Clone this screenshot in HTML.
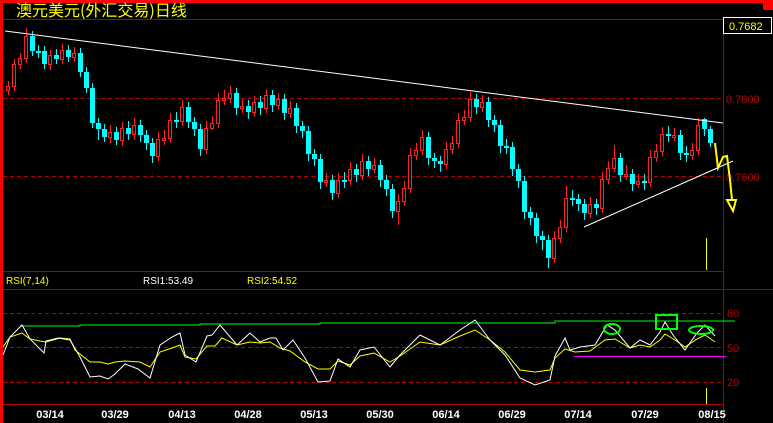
<!DOCTYPE html>
<html><head><meta charset="utf-8"><style>
html,body{margin:0;padding:0;background:#000;overflow:hidden}
svg{display:block}
text{font-family:"Liberation Sans","Noto Sans CJK SC",sans-serif}
</style></head><body>
<svg width="773" height="423" xmlns="http://www.w3.org/2000/svg" shape-rendering="crispEdges">
<rect width="773" height="423" fill="#000"/>
<rect x="0" y="0" width="773" height="3" fill="#f00"/>
<rect x="0" y="0" width="3" height="423" fill="#f00"/>
<rect x="763" y="0" width="10" height="10" fill="#f00"/>
<text x="16" y="16" font-size="16" fill="#ff0" style="font-family:'Noto Sans CJK SC',sans-serif">澳元美元(外汇交易)日线</text>
<line x1="3" y1="19.5" x2="773" y2="19.5" stroke="#a00"/>
<line x1="723.5" y1="19" x2="723.5" y2="423" stroke="#a00"/>
<rect x="723.5" y="17.5" width="48" height="16" fill="#000" stroke="#fff"/>
<text x="729" y="30" font-size="11" fill="#ff0">0.7682</text>
<line x1="3" y1="98.5" x2="723" y2="98.5" stroke="#b00" stroke-dasharray="4,3"/>
<line x1="3" y1="176.5" x2="723" y2="176.5" stroke="#b00" stroke-dasharray="4,3"/>
<text x="726" y="103" font-size="11" fill="#b00">0.7800</text>
<text x="726" y="181" font-size="11" fill="#b00">0.7600</text>

<!-- candles: cyan -->
<path fill="none" stroke="#0ff" d="M32.5 31V56M38.5 45V58M44.5 46V69M56.5 49V64M68.5 45V62M80.5 48V77M86.5 67V93M92.5 83V128M98.5 118V140M104.5 124V142M116.5 127V145M128.5 121V140M140.5 120V142M146.5 130V150M152.5 138V163M176.5 112V128M188.5 102V128M194.5 117V136M200.5 124V156M236.5 88V115M248.5 100V119M260.5 96V115M272.5 90V112M284.5 94V120M296.5 103V133M302.5 121V138M308.5 126V161M314.5 149V166M320.5 154V189M332.5 175V200M344.5 172V188M356.5 164V182M368.5 156V176M380.5 160V187M386.5 175V196M392.5 184V218M428.5 132V165M434.5 153V168M440.5 156V172M476.5 94V114M488.5 97V127M494.5 115V132M500.5 120V153M506.5 139V154M512.5 142V176M518.5 164V188M524.5 176V219M530.5 207V225M536.5 213V243M542.5 231V250M548.5 235V268M572.5 190V206M578.5 194V211M584.5 199V220M596.5 199V215M620.5 153V182M632.5 169V191M644.5 174V190M668.5 126V142M680.5 130V160M686.5 146V162M704.5 118V136M710.5 126V147"/>
<g fill="#0ff">
<rect x="30" y="36" width="5" height="15"/><rect x="36" y="51" width="5" height="2"/><rect x="42" y="51" width="5" height="13"/><rect x="54" y="55" width="5" height="4"/><rect x="66" y="50" width="5" height="7"/><rect x="78" y="53" width="5" height="19"/><rect x="84" y="72" width="5" height="16"/><rect x="90" y="88" width="5" height="35"/><rect x="96" y="123" width="5" height="6"/><rect x="102" y="129" width="5" height="8"/><rect x="114" y="132" width="5" height="8"/><rect x="126" y="128" width="5" height="6"/><rect x="138" y="125" width="5" height="10"/><rect x="144" y="135" width="5" height="8"/><rect x="150" y="143" width="5" height="13"/><rect x="174" y="120" width="5" height="2"/><rect x="186" y="107" width="5" height="15"/><rect x="192" y="122" width="5" height="7"/><rect x="198" y="129" width="5" height="20"/><rect x="234" y="93" width="5" height="15"/><rect x="246" y="106" width="5" height="6"/><rect x="258" y="102" width="5" height="6"/><rect x="270" y="95" width="5" height="10"/><rect x="282" y="99" width="5" height="14"/><rect x="294" y="108" width="5" height="18"/><rect x="300" y="126" width="5" height="5"/><rect x="306" y="131" width="5" height="23"/><rect x="312" y="154" width="5" height="5"/><rect x="318" y="159" width="5" height="23"/><rect x="330" y="180" width="5" height="13"/><rect x="342" y="180" width="5" height="2"/><rect x="354" y="169" width="5" height="6"/><rect x="366" y="161" width="5" height="8"/><rect x="378" y="165" width="5" height="15"/><rect x="384" y="180" width="5" height="9"/><rect x="390" y="189" width="5" height="22"/><rect x="426" y="137" width="5" height="21"/><rect x="432" y="158" width="5" height="3"/><rect x="438" y="161" width="5" height="3"/><rect x="474" y="99" width="5" height="8"/><rect x="486" y="102" width="5" height="18"/><rect x="492" y="120" width="5" height="5"/><rect x="498" y="125" width="5" height="21"/><rect x="504" y="146" width="5" height="2"/><rect x="510" y="147" width="5" height="22"/><rect x="516" y="169" width="5" height="12"/><rect x="522" y="181" width="5" height="31"/><rect x="528" y="212" width="5" height="6"/><rect x="534" y="218" width="5" height="18"/><rect x="540" y="236" width="5" height="4"/><rect x="546" y="240" width="5" height="18"/><rect x="570" y="198" width="5" height="2"/><rect x="576" y="199" width="5" height="5"/><rect x="582" y="204" width="5" height="9"/><rect x="594" y="204" width="5" height="4"/><rect x="618" y="158" width="5" height="17"/><rect x="630" y="174" width="5" height="10"/><rect x="642" y="181" width="5" height="2"/><rect x="666" y="134" width="5" height="2"/><rect x="678" y="135" width="5" height="18"/><rect x="684" y="153" width="5" height="2"/><rect x="702" y="119" width="5" height="10"/><rect x="708" y="129" width="5" height="14"/>
</g>
<!-- candles: red -->
<path fill="none" stroke="#f22" d="M8.5 81V95M14.5 59V91M20.5 53V69M26.5 28V63M50.5 50V70M62.5 44V64M74.5 47V62M110.5 125V143M122.5 122V146M134.5 118V140M158.5 132V161M164.5 130V145M170.5 113V143M182.5 100V126M206.5 121V154M212.5 116V130M218.5 93V128M224.5 90V105M230.5 86V103M242.5 99V113M254.5 96V117M266.5 89V113M278.5 93V110M290.5 101V118M326.5 173V187M338.5 173V198M350.5 162V185M362.5 154V180M374.5 158V174M398.5 194V225M404.5 181V206M410.5 148V193M416.5 143V160M422.5 130V155M446.5 142V169M452.5 136V154M458.5 113V148M464.5 110V125M470.5 92V122M482.5 95V112M554.5 231V263M560.5 220V243M566.5 186V232M590.5 197V218M602.5 172V213M608.5 161V184M614.5 145V172M626.5 165V180M638.5 174V188M650.5 150V187M656.5 144V162M662.5 127V156M674.5 128V141M692.5 143V160M698.5 118V155"/>
<g fill="#000" stroke="#f22">
<rect x="6.5" y="86.5" width="3" height="4"/><rect x="12.5" y="64.5" width="3" height="22"/><rect x="18.5" y="58.5" width="3" height="6"/><rect x="24.5" y="36.5" width="3" height="22"/><rect x="48.5" y="55.5" width="3" height="9"/><rect x="60.5" y="50.5" width="3" height="9"/><rect x="72.5" y="53.5" width="3" height="4"/><rect x="108.5" y="132.5" width="3" height="5"/><rect x="120.5" y="128.5" width="3" height="12"/><rect x="132.5" y="125.5" width="3" height="9"/><rect x="156.5" y="139.5" width="3" height="17"/><rect x="162.5" y="138.5" width="3" height="2"/><rect x="168.5" y="120.5" width="3" height="18"/><rect x="180.5" y="107.5" width="3" height="14"/><rect x="204.5" y="128.5" width="3" height="21"/><rect x="210.5" y="123.5" width="3" height="5"/><rect x="216.5" y="100.5" width="3" height="23"/><rect x="222.5" y="98.5" width="3" height="2"/><rect x="228.5" y="93.5" width="3" height="5"/><rect x="240.5" y="106.5" width="3" height="2"/><rect x="252.5" y="102.5" width="3" height="10"/><rect x="264.5" y="95.5" width="3" height="13"/><rect x="276.5" y="99.5" width="3" height="6"/><rect x="288.5" y="108.5" width="3" height="5"/><rect x="324.5" y="180.5" width="3" height="2"/><rect x="336.5" y="180.5" width="3" height="13"/><rect x="348.5" y="169.5" width="3" height="11"/><rect x="360.5" y="161.5" width="3" height="14"/><rect x="372.5" y="165.5" width="3" height="4"/><rect x="396.5" y="201.5" width="3" height="10"/><rect x="402.5" y="188.5" width="3" height="13"/><rect x="408.5" y="155.5" width="3" height="33"/><rect x="414.5" y="150.5" width="3" height="5"/><rect x="420.5" y="137.5" width="3" height="13"/><rect x="444.5" y="149.5" width="3" height="15"/><rect x="450.5" y="143.5" width="3" height="6"/><rect x="456.5" y="120.5" width="3" height="23"/><rect x="462.5" y="117.5" width="3" height="3"/><rect x="468.5" y="99.5" width="3" height="18"/><rect x="480.5" y="102.5" width="3" height="5"/><rect x="552.5" y="238.5" width="3" height="20"/><rect x="558.5" y="227.5" width="3" height="11"/><rect x="564.5" y="198.5" width="3" height="29"/><rect x="588.5" y="204.5" width="3" height="9"/><rect x="600.5" y="179.5" width="3" height="29"/><rect x="606.5" y="168.5" width="3" height="11"/><rect x="612.5" y="158.5" width="3" height="10"/><rect x="624.5" y="174.5" width="3" height="2"/><rect x="636.5" y="181.5" width="3" height="3"/><rect x="648.5" y="157.5" width="3" height="25"/><rect x="654.5" y="151.5" width="3" height="6"/><rect x="660.5" y="134.5" width="3" height="17"/><rect x="672.5" y="135.5" width="3" height="2"/><rect x="690.5" y="150.5" width="3" height="5"/><rect x="696.5" y="125.5" width="3" height="25"/>
</g>

<line x1="5" y1="31" x2="723" y2="123" stroke="#fff" shape-rendering="auto"/>
<line x1="584" y1="227" x2="733" y2="161" stroke="#fff" shape-rendering="auto"/>
<polyline points="715,143 718,168 723,157 727,156 730,180 732,200" fill="none" stroke="#ff0" stroke-width="2" shape-rendering="auto"/>
<polygon points="727,200 736,200 733,211" fill="none" stroke="#ff0" stroke-width="2" shape-rendering="auto"/>
<line x1="706.5" y1="238" x2="706.5" y2="270" stroke="#ff0"/>

<line x1="3" y1="271.5" x2="723" y2="271.5" stroke="#a00"/>
<line x1="3" y1="289.5" x2="773" y2="289.5" stroke="#a00"/>
<text x="6" y="284" font-size="10" fill="#ff0">RSI(7,14)</text>
<text x="143" y="284" font-size="10" fill="#fff">RSI1:53.49</text>
<text x="247" y="284" font-size="10" fill="#ff0">RSI2:54.52</text>
<line x1="3" y1="313.5" x2="723" y2="313.5" stroke="#b00" stroke-dasharray="4,3"/>
<line x1="3" y1="347.5" x2="723" y2="347.5" stroke="#b00" stroke-dasharray="4,3"/>
<line x1="3" y1="382.5" x2="723" y2="382.5" stroke="#b00" stroke-dasharray="4,3"/>
<text x="727" y="317" font-size="11" fill="#b00">80</text>
<text x="727" y="352" font-size="11" fill="#b00">50</text>
<text x="727" y="386" font-size="11" fill="#b00">20</text>
<line x1="706.5" y1="388" x2="706.5" y2="404" stroke="#ff0"/>
<line x1="3" y1="404.5" x2="723" y2="404.5" stroke="#a00"/>
<g font-size="11" font-weight="bold" fill="#fff" text-anchor="middle" style="font-family:'Liberation Mono',monospace">
<text x="50" y="418">03/14</text><text x="115" y="418">03/29</text><text x="182" y="418">04/13</text><text x="248" y="418">04/28</text><text x="314" y="418">05/13</text><text x="380" y="418">05/30</text><text x="446" y="418">06/14</text><text x="512" y="418">06/29</text><text x="578" y="418">07/14</text><text x="645" y="418">07/29</text><text x="712" y="418">08/15</text>
</g>
<polyline points="20,326 80,326 80,325 200,325 200,324 320,324 320,323 555,323 555,321 735,321" fill="none" stroke="#0f0"/>
<line x1="574" y1="356.5" x2="726" y2="356.5" stroke="#f0f"/>
<polyline shape-rendering="auto" fill="none" stroke="#ff0" points="3,347 10,337 22,333 30,339 40,341 46,342 60,338 70,339 75,350 90,362 100,362 108,364 115,362 125,361 140,362 150,367 160,352 172,348 180,345 185,357 196,359 207,346 215,346 222,338 237,345 250,342 260,343 270,342 280,348 290,351 305,362 318,369 330,369 338,361 350,365 360,356 374,353 390,362 400,356 420,342 440,345 460,336 475,330 490,340 505,352 520,370 535,372 550,370 555,358 565,349 575,352 590,351 605,340 615,339 630,348 640,345 650,347 660,340 665,334 675,340 685,347 697,339 705,335 715,342"/>
<polyline shape-rendering="auto" fill="none" stroke="#fff" points="3,355 10,337 22,325 30,339 44,353 46,341 58,338 70,340 80,357 90,377 100,376 108,379 115,374 125,364 138,369 150,378 160,345 172,337 180,333 185,355 196,362 207,336 212,335 220,325 237,345 250,333 260,342 270,338 276,338 283,350 293,340 305,358 318,382 330,381 338,359 350,367 360,350 374,347 390,367 400,355 420,335 440,345 460,330 475,320 490,340 505,355 520,378 535,385 550,380 555,356 565,338 570,350 580,347 595,345 607,325 615,330 630,348 640,340 650,345 660,332 665,322 673,335 685,350 697,333 705,325 715,336"/>
<ellipse cx="612" cy="329" rx="8" ry="5" fill="none" stroke="#0f0" stroke-width="2" shape-rendering="auto"/>
<rect x="656" y="315" width="21" height="14" fill="none" stroke="#0f0" stroke-width="2"/>
<ellipse cx="701" cy="330" rx="12" ry="4" fill="none" stroke="#0f0" stroke-width="2" shape-rendering="auto"/>
</svg>
</body></html>
